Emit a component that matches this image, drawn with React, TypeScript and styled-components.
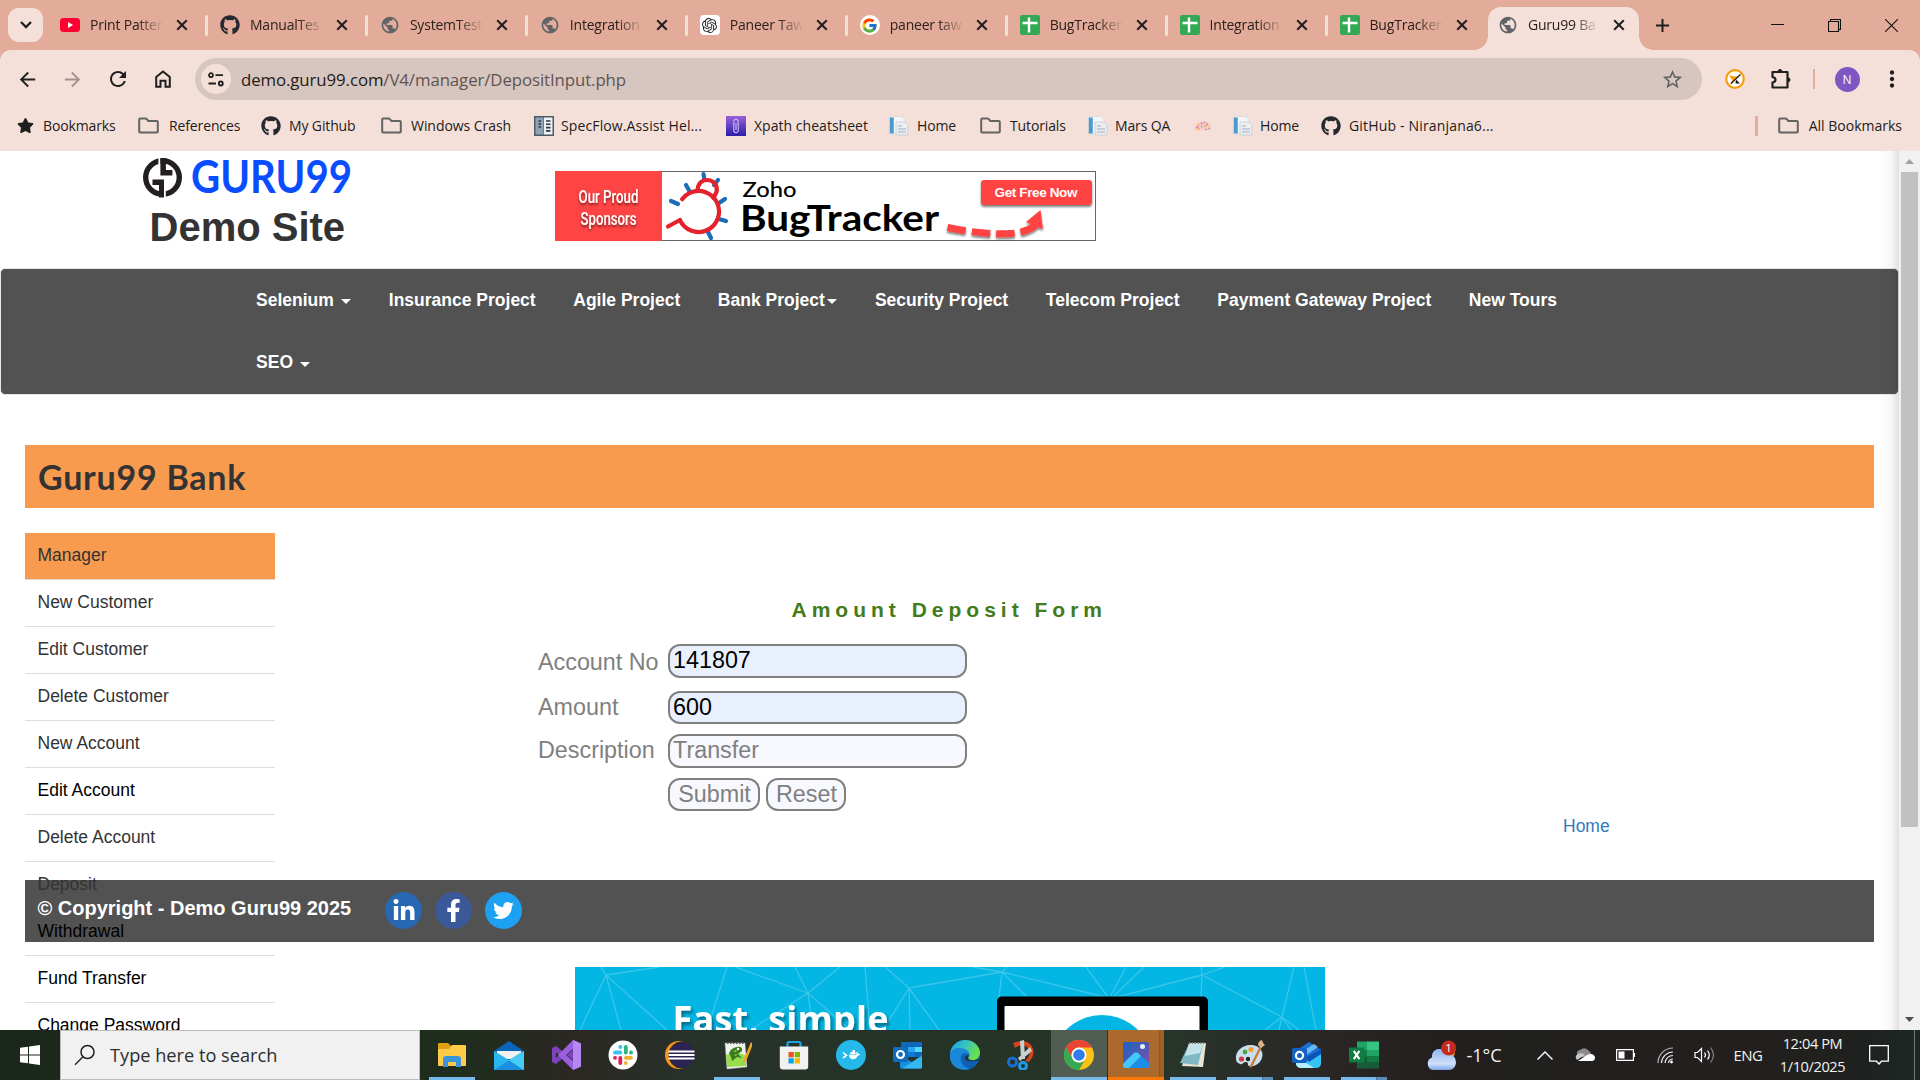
import React from "react";
import styled, { createGlobalStyle, css } from "styled-components";
import { FaGithub, FaLinkedinIn, FaFacebookF, FaTwitter, FaStar } from "react-icons/fa";
import { FcGoogle } from "react-icons/fc";
import { SiOpenai } from "react-icons/si";
import { MdPublic, MdStarOutline, MdArrowBack, MdArrowForward, MdRefresh, MdMoreVert } from "react-icons/md";

const Global = createGlobalStyle`
  html, body { margin: 0; padding: 0; background: #fff; overflow: hidden; }
  * { box-sizing: border-box; }
`;

const ui = css`
  font-family: "Open Sans", "Noto Sans", sans-serif;
`;

const Screen = styled.div`
  width: 1920px;
  height: 1080px;
  display: flex;
  flex-direction: column;
  overflow: hidden;
  ${ui}
`;

/* ---------- browser chrome ---------- */

const TabStrip = styled.div`
  height: 50px;
  flex: none;
  display: flex;
  align-items: center;
  padding-left: 8px;
  background: #e3ab99;
`;

const TabSearch = styled.div`
  width: 35px;
  height: 34px;
  border-radius: 11px;
  background: #f5e0d9;
  display: flex;
  align-items: center;
  justify-content: center;
  margin-right: 5px;
`;

const Tab = styled.div`
  width: 159.95px;
  height: 50px;
  display: flex;
  align-items: center;
  padding-left: 12px;
`;

const ActiveTab = styled.div`
  width: 151px;
  height: 43px;
  align-self: flex-end;
  margin-left: 0.5px;
  padding-left: 10px;
  display: flex;
  align-items: center;
  background: #f5e0d9;
  border-radius: 13px 13px 0 0;
  position: relative;
  padding-bottom: 7px;
  &::before,
  &::after {
    content: "";
    position: absolute;
    bottom: 0;
    width: 14px;
    height: 14px;
  }
  &::before {
    left: -14px;
    background: radial-gradient(circle at 0 0, transparent 13.5px, #f5e0d9 14px);
  }
  &::after {
    right: -14px;
    background: radial-gradient(circle at 100% 0, transparent 13.5px, #f5e0d9 14px);
  }
`;

const Favicon = styled.span`
  width: 20px;
  height: 20px;
  display: flex;
  align-items: center;
  justify-content: center;
  flex: none;
`;

const TabTitle = styled.span<{ $w?: number }>`
  width: ${(p) => p.$w ?? 72}px;
  margin-left: 10px;
  font-size: 14px;
  line-height: 20px;
  letter-spacing: -0.2px;
  color: #2c211e;
  white-space: nowrap;
  overflow: hidden;
  mask-image: linear-gradient(to right, #000 66%, transparent 102%);
`;

const CloseX = styled.span<{ $ml?: number }>`
  margin-left: ${(p) => p.$ml ?? 14}px;
  width: 12px;
  height: 12px;
  display: flex;
  flex: none;
`;

const TabDivider = styled.span`
  width: 3px;
  height: 21px;
  border-radius: 1.5px;
  background: #f5e0d9;
  margin-left: 17px;
`;

const NewTab = styled.div`
  width: 48px;
  display: flex;
  justify-content: center;
`;

const WindowControls = styled.div`
  margin-left: auto;
  display: flex;
`;

const WindowButton = styled.div`
  width: 57px;
  height: 48px;
  display: flex;
  align-items: center;
  justify-content: center;
`;

const ToolbarBack = styled.div`
  background: #e3ab99;
  flex: none;
`;

const Toolbar = styled.div`
  height: 58px;
  background: #f5e0d9;
  border-radius: 11px 11px 0 0;
  display: flex;
  align-items: center;
  padding-left: 5px;
`;

const NavButton = styled.div<{ $dim?: boolean; $w?: number }>`
  width: ${(p) => p.$w ?? 45}px;
  display: flex;
  justify-content: center;
  align-items: center;
  color: ${(p) => (p.$dim ? "#a3928d" : "#1f1f1f")};
`;

const Omnibox = styled.div`
  width: 1507px;
  height: 42px;
  margin: 0 10px;
  border-radius: 21px;
  background: #d7c6bf;
  display: flex;
  align-items: center;
  padding: 0 18px 0 6px;
`;

const SiteInfo = styled.div`
  width: 30px;
  height: 30px;
  border-radius: 50%;
  background: #f5e0d9;
  display: flex;
  align-items: center;
  justify-content: center;
`;

const Url = styled.div`
  flex: 1;
  margin-left: 10px;
  font-size: 16.8px;
  letter-spacing: -0.08px;
  color: #5f5350;
  b {
    font-weight: 400;
    color: #231b19;
  }
`;

const ThinRule = styled.span`
  width: 2px;
  height: 20px;
  background: #e3ab99;
`;

const Avatar = styled.span`
  width: 25px;
  height: 25px;
  border-radius: 50%;
  background: #7e57c2;
  color: #fff;
  font-size: 12px;
  display: flex;
  align-items: center;
  justify-content: center;
`;

const BookmarkBar = styled.div`
  height: 43px;
  flex: none;
  background: #f5e0d9;
  display: flex;
  align-items: center;
  padding: 0 18px 8px 17px;
  font-size: 14px;
  line-height: 18px;
  color: #231b19;
  white-space: nowrap;
`;

const Bookmark = styled.div<{ $w?: number; $gap?: number; $ls?: number }>`
  width: ${(p) => (p.$w ? p.$w + "px" : "auto")};
  display: flex;
  align-items: center;
  gap: ${(p) => p.$gap ?? 8}px;
  flex: none;
  letter-spacing: ${(p) => p.$ls ?? -0.13}px;
`;

const BookmarkRule = styled.span`
  width: 2.5px;
  height: 20px;
  border-radius: 1px;
  background: #e3ab99;
  margin: 0 20px 0 auto;
`;

/* ---------- page ---------- */

const Viewport = styled.div`
  height: 879px;
  flex: none;
  display: flex;
  background: #fff;
  overflow: hidden;
  font-family: "Liberation Sans", Arial, sans-serif;
  font-size: 17.5px;
`;

const Page = styled.div`
  width: 1899px;
  height: 879px;
  overflow: hidden;
  color: #333;
  position: relative;
`;

const EdgeShade = styled.div`
  position: absolute;
  right: 0;
  top: 0;
  bottom: 0;
  width: 20px;
  background: linear-gradient(to right, rgba(0, 0, 0, 0), rgba(0, 0, 0, 0.03) 60%, rgba(0, 0, 0, 0.12));
`;

const Scrollbar = styled.div`
  width: 21px;
  background: #f1f1f1;
  display: flex;
  flex-direction: column;
  align-items: center;
`;

const ScrollArrow = styled.div`
  height: 21px;
  display: flex;
  align-items: center;
`;

const ScrollThumb = styled.div`
  width: 17px;
  height: 655px;
  background: #c1c1c1;
  margin-bottom: auto;
`;

const SiteHeader = styled.div`
  height: 117px;
  display: flex;
  padding-left: 142px;
`;

const Brand = styled.div`
  width: 413px;
  padding-top: 5px;
`;

const DemoSite = styled.h2`
  margin: 4px 0 0 7.5px;
  font-size: 40px;
  line-height: 46px;
  font-weight: 700;
  color: #333;
`;

const Sponsor = styled.div`
  padding-top: 20px;
`;

const NavBar = styled.nav`
  height: 127px;
  border: 1px solid #e7e7e7;
  border-radius: 5px;
  background: #525252;
  display: flex;
  flex-wrap: wrap;
  align-content: flex-start;
  padding: 0 300px 0 236.25px;
`;

const NavItem = styled.a`
  height: 62.5px;
  padding: 0 18.8px;
  display: flex;
  align-items: center;
  color: #fff;
  font-weight: 700;
  white-space: pre;
`;

const Caret = styled.span`
  margin: 3px 0 0 2.5px;
  border: 5px solid transparent;
  border-top-color: #fff;
  border-bottom: 0;
`;

const Container = styled.div`
  padding: 50px 25px 0;
`;

const BankBar = styled.div`
  height: 63px;
  padding-left: 13px;
  background: #f99b4f;
  font: 700 34px/63px Lato, "Open Sans", sans-serif;
  letter-spacing: 0.75px;
  color: #333;
`;

/* Zero-height so the list runs on beneath the footer, whose background
   covers the rules while the link text stays on top. */
const SideMenu = styled.ul`
  list-style: none;
  width: 250px;
  height: 0;
  margin: 25px 0 0;
  padding: 0;
`;

const SideItem = styled.li<{ $active?: boolean; $black?: boolean }>`
  height: 47px;
  padding-left: 12.5px;
  line-height: 45px;
  border-bottom: 1px solid #ddd;
  background: ${(p) => (p.$active ? "#f99b4f" : "transparent")};
  color: ${(p) => (p.$black ? "#000" : "#333")};
`;

const FormArea = styled.div`
  height: 347px;
  padding: 65px 0 0 513px;
`;

const FormHeading = styled.div`
  height: 46px;
  padding-left: 253.5px;
  font-size: 21px;
  line-height: 24px;
  font-weight: 700;
  letter-spacing: 5px;
  color: #437c1a;
`;

const FormRow = styled.div<{ $h: number; $mb: number }>`
  height: ${(p) => p.$h}px;
  margin-bottom: ${(p) => p.$mb}px;
  display: flex;
  align-items: stretch;
  font-size: 23.33px;
  color: #808080;
`;

const Label = styled.label<{ $drop?: number }>`
  width: 130px;
  line-height: 34px;
  margin-top: ${(p) => p.$drop ?? 0}px;
`;

const fieldSkin = css`
  border: 2px solid #808080;
  border-radius: 12px;
  font: 23.33px "Liberation Sans", Arial, sans-serif;
  outline: none;
`;

const Field = styled.input<{ $filled?: boolean; $pl?: number; $pb?: number }>`
  ${fieldSkin}
  width: 299px;
  padding: 0 2px ${(p) => p.$pb ?? 2}px ${(p) => p.$pl ?? 3}px;
  background: ${(p) => (p.$filled ? "#e8f0fe" : "#f8f8ff")};
  color: ${(p) => (p.$filled ? "#000" : "#808080")};
`;

const Button = styled.button<{ $w: number }>`
  ${fieldSkin}
  width: ${(p) => p.$w}px;
  margin-right: 6px;
  padding: 0 0 0 1px;
  background: #f8f8ff;
  color: #808080;
`;

const HomeLink = styled.div`
  padding-left: 1025px;
  padding-top: 5px;
  line-height: 20px;
  color: #337ab7;
`;

const Footer = styled.div`
  height: 62px;
  background: #525252;
  padding-left: 12.5px;
  color: #fff;
  font-size: 20px;
  font-weight: 700;
  line-height: 57px;
  white-space: nowrap;
`;

const Social = styled.span<{ $bg: string; $ml: number }>`
  display: inline-flex;
  width: 37px;
  height: 37px;
  margin-left: ${(p) => p.$ml}px;
  border-radius: 50%;
  background: ${(p) => p.$bg};
  align-items: center;
  justify-content: center;
  vertical-align: middle;
  line-height: 0;
  margin-top: 2px;
`;

const Promo = styled.div`
  margin: 25px 0 0 550px;
  width: 750px;
  height: 63px;
  overflow: hidden;
  line-height: 0;
`;

/* ---------- taskbar ---------- */

const Taskbar = styled.div`
  height: 50px;
  flex: none;
  display: flex;
  background: linear-gradient(to right, #1c271b 0, #1f2d1d 460px, #2b2723 570px, #27322a 690px, #253426 1000px, #28332a 1180px, #2a2625 1330px, #231f1e 1440px, #20201e 1520px, #241f1e 1700px, #1f211f 1860px, #1d2723 1910px);
  color: #f2f2f2;
`;

const StartButton = styled.div`
  width: 60px;
  display: flex;
  align-items: center;
  justify-content: center;
`;

const SearchBox = styled.div`
  width: 360px;
  background: #f1f1f1;
  border: 1px solid #bdbdbd;
  display: flex;
  align-items: center;
  padding-left: 13px;
  gap: 14px;
  font-size: 18.2px;
  color: #2d2d2d;
`;

const AppStrip = styled.div`
  display: flex;
  margin-left: 3.5px;
`;

const AppSlot = styled.div<{ $bg?: string; $line?: string; $full?: boolean }>`
  width: 57px;
  height: 50px;
  display: flex;
  flex-direction: column;
  align-items: center;
  padding-top: 10px;
  justify-content: space-between;
  background: ${(p) => p.$bg ?? "transparent"};
  &::after {
    content: "";
    width: ${(p) => (p.$full ? 56 : 46)}px;
    height: 3px;
    background: ${(p) => p.$line ?? "transparent"};
  }
`;

const Tray = styled.div`
  flex: 1;
  display: flex;
  align-items: center;
  padding-left: 33px;
`;

const TrayCell = styled.div<{ $w: number }>`
  width: ${(p) => p.$w}px;
  display: flex;
  justify-content: center;
  align-items: center;
  flex: none;
`;

const Temp = styled(TrayCell)`
  font-size: 18px;
  justify-content: flex-start;
  padding-left: 10px;
`;

const Lang = styled(TrayCell)`
  font-size: 15px;
  letter-spacing: -0.5px;
`;

const Clock = styled(TrayCell)`
  flex-direction: column;
  font-size: 14.6px;
  line-height: 23px;
  letter-spacing: -0.4px;
`;

const DesktopEdge = styled.div`
  width: 1px;
  height: 50px;
  margin-left: auto;
  margin-right: 5px;
  background: #777;
`;

/* ---------- icons ---------- */

const XMark = () => (
  <svg width="12" height="12" viewBox="0 0 12 12" stroke="#1f1f1f" strokeWidth="2">
    <path d="M1.2 1.2l9.6 9.6M10.8 1.2L1.2 10.8" />
  </svg>
);

const YouTube = () => (
  <svg width="20" height="20" viewBox="0 0 20 20">
    <rect y="3" width="20" height="14" rx="3.4" fill="#ff0033" />
    <path d="M8 7l5 3-5 3z" fill="#fff" />
  </svg>
);

const Sheets = () => (
  <svg width="20" height="20" viewBox="0 0 20 20">
    <rect width="20" height="20" rx="2" fill="#34a853" />
    <path d="M9 2.5v15M2.5 8h15" stroke="#fff" strokeWidth="2.4" />
  </svg>
);

const OpenAiTile = styled.span`
  width: 20px;
  height: 20px;
  border-radius: 4px;
  background: #fff;
  display: flex;
  align-items: center;
  justify-content: center;
`;

const GoogleTile = styled(OpenAiTile)`
  border-radius: 50%;
`;

const Folder = () => (
  <svg width="21" height="17" viewBox="0 0 21 17" fill="none" stroke="#636363" strokeWidth="2" strokeLinejoin="round">
    <path d="M1.2 3V14.5q0 1 1 1h16.6q1 0 1-1V5q0-1-1-1H10.5L8 1.4H2.2q-1 0-1 1z" />
  </svg>
);

const SpecFlow = () => (
  <svg width="20" height="20" viewBox="0 0 20 20">
    <rect width="20" height="20" fill="#4b5a66" />
    <rect x="1.5" y="1.5" width="8" height="17" fill="#8fa3b5" />
    <rect x="10" y="1.5" width="8.5" height="17" fill="#eef2f5" />
    <path d="M4.500 5h2.500M4.500 8h2.500M4.500 11h2.500M12 5h4.500M12 8.300h4.500M12 11.600h4.500M12 14.900h4.500" stroke="#2d3944" strokeWidth="1.6" />
  </svg>
);

const Xpath = () => (
  <svg width="20" height="20" viewBox="0 0 20 20">
    <defs>
      <linearGradient id="xp" x1="0" y1="0" x2="0" y2="1">
        <stop offset="0" stopColor="#9a62d8" />
        <stop offset="1" stopColor="#2a1fa8" />
      </linearGradient>
    </defs>
    <rect width="20" height="20" fill="url(#xp)" />
    <path d="M7.800 6v8.500a2.200 2.200 0 004.400 0V5.500a2 2 0 00-4.400 0M10 7v7" fill="none" stroke="#c9bdf2" strokeWidth="1.1" />
  </svg>
);

const PageIcon = () => (
  <svg width="20" height="20" viewBox="0 0 20 20">
    <path d="M1 .5h12l3 3V18H1z" fill="#f4f6f8" stroke="#cdd5dc" strokeWidth=".7" />
    <path d="M.8 1.500h4v16h-4z" fill="#4b9bd0" />
    <path d="M7 6h9l3 3v10H7z" fill="#eceff2" stroke="#bcc5cd" strokeWidth=".7" />
    <path d="M9 10h4M9 13h8M9 16h8" stroke="#b7c4d0" strokeWidth="1.4" />
  </svg>
);

const Brain = () => (
  <svg width="20" height="20" viewBox="0 0 20 20">
    <path d="M1 13.500q0-5 4-6.500 3-2.500 7-2 5 1 6 6l-1 4-3-1.500-5 1-3-1-2 1.500z" fill="#f3cfc6" />
    <path d="M3 12l3-2M8 6.500l1.500 2.500M15 7.500l-2 2M12 14l2-1" stroke="#e678a8" strokeWidth="1.300" />
    <path d="M11 11l3-2M5 14l2-2M5 9l1-1" stroke="#f0a84e" strokeWidth="1.300" />
    <path d="M8 10l1 1.500M15.500 12l1.500 1M11 6l1 1" stroke="#8f96de" strokeWidth="1.300" />
  </svg>
);

const GuruLogo = () => (
  <svg width="216" height="44" viewBox="0 0 216 44" style={{ display: "block" }}>
    <ellipse cx="20.500" cy="21.500" rx="16.800" ry="16.800" fill="none" stroke="#231f20" strokeWidth="5.400" />
    <path d="M17.400 0v25M22.800 20v24" stroke="#fff" strokeWidth="2" />
    <path d="M18.400 2v17.500h12V14h-6.500V2z" fill="#231f20" />
    <path d="M10.500 23.500h11.500v18h-5v-12.500h-6.500z" fill="#231f20" />
    <path d="M18 21.300h14" stroke="#fff" strokeWidth="1.800" />
    <text x="49" y="37" fontFamily="Lato, sans-serif" fontWeight="700" fontSize="46.500" fill="#0a4dff" textLength="161" lengthAdjust="spacingAndGlyphs">
      GURU99
    </text>
  </svg>
);

const SponsorBanner = () => (
  <svg width="541" height="70" viewBox="0 0 541 70" style={{ display: "block" }}>
    <defs>
      <filter id="soft" x="-20%" y="-20%" width="140%" height="160%">
        <feDropShadow dx="0" dy="2" stdDeviation="1.2" floodOpacity=".5" />
      </filter>
    </defs>
    <rect x=".5" y=".5" width="540" height="69" fill="#fff" stroke="#666" />
    <rect width="107" height="70" fill="#ff4444" />
    <g fontFamily="Roboto, sans-serif" fontSize="18" fill="#fff" filter="url(#soft)" fontWeight="500">
      <text x="23.500" y="31.500" textLength="60" lengthAdjust="spacingAndGlyphs">Our Proud</text>
      <text x="25.500" y="54" textLength="56" lengthAdjust="spacingAndGlyphs">Sponsors</text>
    </g>
    <path d="M148.500 3l1 6M163 9l-4 5M131 14l4 7M116 30l7 3M170 28l-6 4M171 50l-7-2M156 67l-4-8" stroke="#1c6db8" strokeWidth="4.200" strokeLinecap="round" />
    <g fill="none" stroke="#e4222b" strokeWidth="4.200" strokeLinecap="round">
      <path d="M142.500 20c0-7 4-11 9.500-11 7 0 11 6 9.500 12l-3 6" />
      <ellipse cx="143.500" cy="40.500" rx="20.500" ry="20.500" strokeDasharray="106 23" transform="rotate(-205 143.500 40.500) scale(1 -1) translate(0 -81)" />
      <path d="M125 49l-12 6.500" />
    </g>
    <text x="187.500" y="25.500" fontFamily="Lato, sans-serif" fontSize="22" fontWeight="500" textLength="54" lengthAdjust="spacingAndGlyphs">Zoho</text>
    <text x="185" y="60" fontFamily="Lato, sans-serif" fontSize="36.500" fontWeight="700" textLength="199" lengthAdjust="spacingAndGlyphs">BugTracker</text>
    <g filter="url(#soft)">
      <rect x="426" y="9" width="111" height="25" rx="3" fill="#ff4343" />
      <path d="M392.500 56.500Q430 64 455 62.500q20-1 29-12" fill="none" stroke="#ff4343" strokeWidth="7" strokeDasharray="18.500 6" />
      <path d="M485.500 39l2.500 19-17-7z" fill="#ff4343" />
    </g>
    <text x="439.500" y="26" fontFamily="Liberation Sans, sans-serif" fontSize="13.500" fontWeight="700" fill="#fff" textLength="83">Get Free Now</text>
  </svg>
);

const promoLines =
  "M31 8L26 0M31 8L84 0M31 8L5 63M31 8L46 63M31 8L92 63M152 0L132 63M233 26L160 0M233 26L220 0M233 26L265 0M233 26L175 63M233 26L238 63M233 26L275 63M290 0L295 63M334 21L310 0M334 21L427 5M334 21L308 63M334 21L335 63M334 21L364 63M427 5L398 0M427 5L424 30M427 5L452 30M427 5L530 30M427 5L432 0M511 0L533 30M551 0L535 30M569 0L538 30M538 31L627 8M627 8L650 0M627 8L626 0M627 8L626 30M627 8L707 50M719 0L707 50M729 0L741 63M707 50L690 63M707 50L704 63M707 50L716 63M707 50L724 63";

const PromoArt = () => (
  <svg width="750" height="63" viewBox="0 0 750 63">
    <defs>
      <filter id="txt" x="-5%" y="-20%" width="115%" height="160%">
        <feDropShadow dx="2" dy="3" stdDeviation="1.500" floodOpacity=".4" />
      </filter>
    </defs>
    <rect width="750" height="63" fill="#03b6e3" />
    <path d={promoLines} stroke="#5fd0ee" strokeOpacity=".6" strokeWidth="1.300" fill="none" />
    <text x="97.500" y="65" fontFamily="Open Sans, sans-serif" fontSize="36" fontWeight="700" fill="#fff" textLength="216" filter="url(#txt)">Fast, simple</text>
    <rect x="422" y="29.500" width="211" height="60" rx="5" fill="#000" />
    <rect x="429.500" y="39" width="195" height="50" rx="1" fill="#fff" />
    <circle cx="527" cy="99" r="51" fill="#03b6e3" />
  </svg>
);

const I = (p: { children: React.ReactNode }) => (
  <svg width="30" height="30" viewBox="0 0 30 30">
    {p.children}
  </svg>
);

const Explorer = () => (
  <I>
    <path d="M1 4q0-1 1-1h9l3 3v6H1z" fill="#e39f14" />
    <path d="M1 9h11l3-4h13q1 0 1 1v19q0 1-1 1H2q-1 0-1-1z" fill="#fdcb48" />
    <path d="M6 27v-8q0-3 3-3h12q3 0 3 3v8h-5v-5h-8v5z" fill="#3a93dd" />
  </I>
);
const Mail = () => (
  <I>
    <path d="M0 11L15 1l15 10v6H0z" fill="#0a64b8" />
    <path d="M3 11h24v8H3z" fill="#f2f2f2" />
    <path d="M0 11l15 9 15-9v19H0z" fill="#29b5ee" />
    <path d="M0 30L30 11v19z" fill="#1a8fe0" />
    <path d="M30 30L13 19l2 1 15-9z" fill="#45ccf5" />
  </I>
);
const VisualStudio = () => (
  <I>
    <path d="M1 8l4-2 18 15V9L5 24l-4-2V8zm4 4v6l3-3z" fill="#7d43bd" fillRule="evenodd" />
    <path d="M7 15L22 0l8 3.500v23L22 30z M15 15l7 6V9z" fill="#9a5fe0" fillRule="evenodd" />
    <path d="M22 0l8 3.500v23L22 30z" fill="#b587f0" />
  </I>
);
const Slack = () => (
  <I>
    <circle cx="15" cy="15" r="14.500" fill="#fff" />
    <g strokeWidth="3.800" strokeLinecap="round" fill="none">
      <path d="M12.300 7v.1M7 12.500h5.300" stroke="#36c5f0" />
      <path d="M17.800 7v5.500M23 12.500h.1" stroke="#2eb67d" />
      <path d="M17.800 17.800H23M17.800 23v.1" stroke="#ecb22e" />
      <path d="M12.300 17.800V23M7 17.800h.1" stroke="#e01e5a" />
    </g>
  </I>
);
const Eclipse = () => (
  <I>
    <circle cx="14" cy="15" r="14" fill="#f7941e" />
    <circle cx="17" cy="15" r="13.200" fill="#2c2255" stroke="#26321f" />
    <path d="M3.500 11.500h26M3.500 15h26M3.500 18.500h26" stroke="#fff" strokeWidth="1.900" />
  </I>
);
const NotepadPP = () => (
  <I>
    <path d="M3 3h20l2 24-20 2z" fill="#eef2e8" stroke="#aab" strokeWidth=".5" />
    <path d="M4 15q9-4 19 0l1 11-19 1z" fill="#9bdc4e" />
    <path d="M7 13q2-5 8-6t5 4l-4 3 4 4-5-1-5 4-1-4z" fill="#3b7d1e" />
    <path d="M11 11l4-1-1 2zM12 15l3-1-1 2z" fill="#9bdc4e" />
    <path d="M5 3h17" stroke="#555" strokeWidth="2" strokeDasharray="1.500 1.500" />
    <path d="M29 2l-7 17-1 5 3.500-4L31 4z" fill="#f1a51f" />
    <circle cx="16" cy="9" r="1.200" fill="#fff" />
  </I>
);
const Store = () => (
  <I>
    <path d="M8.500 8V3.500Q8.500 2 10 2h10q1.500 0 1.500 1.500V8" fill="none" stroke="#1fa3e8" strokeWidth="2.200" />
    <path d="M.8 6.500h28.400v20q0 3-3 3H3.800q-3 0-3-3z" fill="#f1f1f1" />
    <path d="M9.500 12h5.300v5.300H9.500z" fill="#f25022" />
    <path d="M15.700 12H21v5.300h-5.300z" fill="#7fba00" />
    <path d="M9.500 18.200h5.300v5.300H9.500z" fill="#00a4ef" />
    <path d="M15.700 18.200H21v5.300h-5.300z" fill="#ffb900" />
  </I>
);
const Docker = () => (
  <I>
    <circle cx="15" cy="15" r="15" fill="#24b8eb" />
    <path d="M7 12.500l3.500 2.800L7 18" stroke="#fff" strokeWidth="1.600" fill="none" />
    <path d="M13 14.500h7.500q.2-2-.6-2.500 2-.5 2.300 1.800 1.500-.2 2 .5-.8 1.500-2.500 1.400-1.500 3.500-5 3.500-3.500 0-3.700-4.700zM14.500 12h5v2h-5zM16.500 10h2.500v2h-2.500z" fill="#fff" />
  </I>
);
const Outlook = () => (
  <I>
    <path d="M9 2h19q1 0 1 1v14H8V3q0-1 1-1z" fill="#1068bb" />
    <path d="M15 7h7v5h-7z" fill="#28a8ea" />
    <path d="M22 7h7v5h-7z" fill="#50d9ff" />
    <path d="M15 12h7v5h-7z" fill="#0f78d4" />
    <path d="M7 15l12 7 10-7v12q0 1.500-1.500 1.500h-19Q7 28.500 7 27z" fill="#1490df" />
    <path d="M29 16L9 28.500h19q1 0 1-1z" fill="#35b8f1" />
    <rect x="0" y="7" width="15" height="15" rx="1.500" fill="#0f6cbd" />
    <circle cx="7.500" cy="14.500" r="3.500" fill="none" stroke="#fff" strokeWidth="2.200" />
  </I>
);
const Edge = () => (
  <I>
    <defs>
      <linearGradient id="eg" x1="0" y1="0" x2="1" y2=".4">
        <stop offset="0" stopColor="#1b9de2" />
        <stop offset=".5" stopColor="#34c1c4" />
        <stop offset="1" stopColor="#6bdf4e" />
      </linearGradient>
    </defs>
    <circle cx="15" cy="15" r="15" fill="#0f5fb5" />
    <path d="M0 14C1 5 8 0 15 0c9 0 15 6.500 15 12.500 0 5-3.500 7.500-7.500 7.500-4 0-5-1.500-3.500-3.500 1.500-3-1-6.500-5-6.500C8 10 2 11 0 14z" fill="url(#eg)" />
    <path d="M0 15c1-5 5-7.500 10-7 5 0 9 3 9 7-5-4-9 0-8 5 1 6 6 8 9 9C8 32-1 25 0 15z" fill="#1a87d9" />
    <path d="M19 15q-2 3 0 4.500 4 2 9.500-.5l1.500 2q-2-1-6 0-8 1-9-2-.5-3.500 4-4z" fill="#26342a" />
  </I>
);
const Snip = () => (
  <I>
    <path d="M6 3q12-5 18 2 6 8-2 17l-4-1q8-8 2-14-5-4-12 1z" fill="#d8421c" />
    <path d="M13 1l4-1 1 19h-4zM23 7l2 4-12 10-2-3z" fill="#c8cdd0" />
    <circle cx="5.500" cy="22" r="4" fill="none" stroke="#1c6fd0" strokeWidth="3" />
    <circle cx="16" cy="26" r="3.500" fill="none" stroke="#2099ea" strokeWidth="3" />
  </I>
);
const Chrome = () => (
  <I>
    <circle cx="15" cy="15" r="15" fill="#fbc116" />
    <path d="M2 7.500A15 15 0 0128 7.500H15A7.500 7.500 0 008.500 18.700z" fill="#ea4335" />
    <path d="M2 7.500A15 15 0 0015 30l6.500-11.300A7.500 7.500 0 018.500 18.700z" fill="#34a853" />
    <circle cx="15" cy="15" r="7.500" fill="#fff" />
    <circle cx="15" cy="15" r="5.800" fill="#2f7de9" />
  </I>
);
const Photos = () => (
  <I>
    <defs>
      <linearGradient id="ph" x1="0" y1="0" x2="1" y2="1">
        <stop offset="0" stopColor="#1464c0" />
        <stop offset="1" stopColor="#8a4ea8" />
      </linearGradient>
    </defs>
    <rect x="2" y="2" width="26" height="26" rx="2" fill="url(#ph)" />
    <path d="M2 23l11-10q2-2 4 0l11 10v3q0 2-2 2H4q-2 0-2-2z" fill="#1b8fe8" />
    <path d="M2 24l11-11q2-1 4 0l3 3L8 28H4q-2 0-2-2z" fill="#46c7fa" />
    <circle cx="21.500" cy="6.500" r="2.500" fill="#e6f3ff" />
  </I>
);
const Notepad = () => (
  <I>
    <path d="M11 3h17l-3 24-21-1z" fill="#e8e4d4" />
    <path d="M11 4h14l-5 21-18-2z" fill="#7fb9c6" />
    <path d="M11 4h14l-3 9-15 3z" fill="#c4e3e8" />
    <path d="M11 3h16" stroke="#777" strokeWidth="2" strokeDasharray="1.400 1.400" />
  </I>
);
const Paint = () => (
  <I>
    <path d="M1 19C0 11 8 4 17 5c8 1 12 7 10 13s-8 9-13 8c-2-1 0-4-3-4s-3 3-6 2-4-3-4-5z" fill="#c9dff0" />
    <circle cx="6.500" cy="19" r="2.600" fill="#d03b3b" />
    <circle cx="10" cy="12" r="2.400" fill="#46a546" />
    <circle cx="16" cy="9.500" r="2.600" fill="#f2a12c" />
    <circle cx="13" cy="19" r="2.200" fill="#252525" />
    <path d="M25 6l2 1-10 20-2 1 .5-3z" fill="#c97a28" />
    <path d="M23 5q0-4 4-5 1 4 3 5l-4 3z" fill="#d9b184" />
  </I>
);
const OutlookNew = () => (
  <I>
    <path d="M5 10L17 2l12 8v9H5z" fill="#1b6fd0" />
    <path d="M9 12L22 4l4 3-13 9z" fill="#69b8f5" />
    <path d="M14 18l15-9v14q0 5-5 5H9q-4 0-5-4z" fill="#36c4f5" />
    <path d="M5 17l17 11H9q-4 0-5-4z" fill="#b5edfc" />
    <path d="M13 18l16-9v5L17 22z" fill="#0a53b8" />
    <rect x="0" y="8" width="15" height="15" rx="2" fill="#0f62c0" />
    <circle cx="7.500" cy="15.500" r="3.600" fill="none" stroke="#fff" strokeWidth="2.200" />
  </I>
);
const Excel = () => (
  <I>
    <path d="M8 1.500h11v9H8z" fill="#21a366" />
    <path d="M18 1.500h12v9H18z" fill="#33c481" />
    <path d="M8 10h10v7H8z" fill="#107c41" />
    <path d="M18 10h12v7H18z" fill="#21a366" />
    <path d="M8 17h22v11.500H8z" fill="#185c37" />
    <path d="M18 16h12v6H18z" fill="#107c41" />
    <rect x="0" y="7.500" width="15.500" height="15" rx="1" fill="#107c41" />
    <path d="M4.800 10.800l5.600 8.400M10.400 10.800l-5.600 8.400" stroke="#fff" strokeWidth="2.100" />
  </I>
);

const Weather = () => (
  <svg width="31" height="32" viewBox="0 0 31 32">
    <defs>
      <linearGradient id="cl" x1="0" y1="0" x2="0" y2="1">
        <stop offset="0" stopColor="#8fb6f0" />
        <stop offset=".7" stopColor="#cfe0fb" />
        <stop offset="1" stopColor="#7ea8ea" />
      </linearGradient>
    </defs>
    <circle cx="22" cy="13" r="7" fill="#f59a23" />
    <path d="M7 31a6.500 6.500 0 01-1-12.500C5.500 12 10 9.500 14 10q5 .5 7.500 5.500 2-.5 4 .5Q30 18 30 24q-1 7-7 7z" fill="url(#cl)" />
    <circle cx="22.700" cy="9" r="7.600" fill="#c42b1c" />
    <text x="22.500" y="13" fontFamily="Open Sans, sans-serif" fontSize="11.500" fill="#fff" textAnchor="middle">1</text>
  </svg>
);

/* ---------- data ---------- */

const tabs: [React.ReactNode, string][] = [
  [<YouTube />, "Print Patter"],
  [<FaGithub size={20} color="#24292f" />, "ManualTes"],
  [<MdPublic size={22} color="#5f6368" />, "SystemTest"],
  [<MdPublic size={22} color="#5f6368" />, "Integration"],
  [<OpenAiTile><SiOpenai size={15} color="#222" /></OpenAiTile>, "Paneer Taw"],
  [<GoogleTile><FcGoogle size={17} /></GoogleTile>, "paneer taw"],
  [<Sheets />, "BugTracker"],
  [<Sheets />, "Integration"],
  [<Sheets />, "BugTracker"],
];

const sideLinks: [string, boolean][] = [
  ["Manager", false],
  ["New Customer", false],
  ["Edit Customer", false],
  ["Delete Customer", false],
  ["New Account", false],
  ["Edit Account", true],
  ["Delete Account", false],
  ["Deposit", false],
  ["Withdrawal", true],
  ["Fund Transfer", true],
  ["Change Password", true],
];

const BLUE = "#76b9ed";

export default function App() {
  return (
    <Screen>
      <Global />
      <TabStrip>
        <TabSearch>
          <svg width="12" height="8" viewBox="0 0 12 8" fill="none" stroke="#1f1f1f" strokeWidth="2.300">
            <path d="M1 1l5 5 5-5" />
          </svg>
        </TabSearch>
        {tabs.map(([icon, title], i) => (
          <Tab key={i}>
            <Favicon>{icon}</Favicon>
            <TabTitle>{title}</TabTitle>
            <CloseX><XMark /></CloseX>
            {i < 8 && <TabDivider />}
          </Tab>
        ))}
        <ActiveTab>
          <Favicon><MdPublic size={22} color="#5f6368" /></Favicon>
          <TabTitle $w={69}>Guru99 Ba</TabTitle>
          <CloseX $ml={16}><XMark /></CloseX>
        </ActiveTab>
        <NewTab>
          <svg width="13" height="13" viewBox="0 0 13 13" stroke="#1f1f1f" strokeWidth="2">
            <path d="M6.500 0v13M0 6.500h13" />
          </svg>
        </NewTab>
        <WindowControls>
          <WindowButton>
            <svg width="13" height="2"><path d="M0 .5h13" stroke="#111" /></svg>
          </WindowButton>
          <WindowButton>
            <svg width="13" height="13" viewBox="0 0 13 13" fill="none" stroke="#111" strokeWidth="1.100">
              <path d="M.5 2.500h10v10H.5zM2.500 2.500v-2h10v10h-2" />
            </svg>
          </WindowButton>
          <WindowButton>
            <svg width="13" height="13" viewBox="0 0 13 13" stroke="#111" strokeWidth="1.100">
              <path d="M0 0l13 13M13 0L0 13" />
            </svg>
          </WindowButton>
        </WindowControls>
      </TabStrip>

      <ToolbarBack>
        <Toolbar>
          <NavButton><MdArrowBack size={23} /></NavButton>
          <NavButton $dim><MdArrowForward size={23} /></NavButton>
          <NavButton><MdRefresh size={24} /></NavButton>
          <NavButton>
            <svg width="16" height="18" viewBox="0 0 16 18" fill="none" stroke="#1f1f1f" strokeWidth="2">
              <path d="M1.200 7L8 1.500 14.800 7v9.800h-4.300v-6h-5v6H1.200z" />
            </svg>
          </NavButton>
          <Omnibox>
            <SiteInfo>
              <svg width="16" height="15" viewBox="0 0 16 15" fill="none" stroke="#1f1f1f" strokeWidth="1.800">
                <circle cx="3" cy="3.200" r="2" />
                <path d="M7.500 3.200H15M.5 11.500H8" />
                <circle cx="12.800" cy="11.500" r="2" />
              </svg>
            </SiteInfo>
            <Url><b>demo.guru99.com</b>/V4/manager/DepositInput.php</Url>
            <MdStarOutline size={23} color="#5f5f5f" />
          </Omnibox>
          <NavButton $w={46}>
            <svg width="20" height="20" viewBox="0 0 20 20">
              <circle cx="10" cy="10" r="8.800" fill="#fff" stroke="#f89c0e" strokeWidth="2.200" />
              <path d="M4 6.500l6 1 5-1-4 3-1 2-3 3-2 1 2.500-4z" fill="#f89c0e" />
              <path d="M15.500 5.500L6 14.500" stroke="#1b1b1b" strokeWidth="1.200" />
              <path d="M11 10.500l4 4h-4.500z" fill="#1b1b1b" />
            </svg>
          </NavButton>
          <NavButton $w={46}>
            <svg width="22" height="22" viewBox="0 0 22 22" fill="none" stroke="#1f1f1f" strokeWidth="2.200" strokeLinejoin="round">
              <path d="M2.500 4h15v15.500h-15v-5q3-.5 3-2.700T2.500 9z" />
              <path d="M8 3.500a2 2 0 014 0zM18 9.800a2 2 0 010 4z" fill="#1f1f1f" strokeWidth="1" />
            </svg>
          </NavButton>
          <NavButton $w={20}><ThinRule /></NavButton>
          <NavButton $w={46}><Avatar>N</Avatar></NavButton>
          <NavButton $w={44}><MdMoreVert size={26} /></NavButton>
        </Toolbar>
      </ToolbarBack>

      <BookmarkBar>
        <Bookmark $w={121} $gap={9}><FaStar size={17} color="#1f1f1f" />Bookmarks</Bookmark>
        <Bookmark $w={123} $gap={10}><Folder />References</Bookmark>
        <Bookmark $w={120}><FaGithub size={20} color="#24292f" />My Github</Bookmark>
        <Bookmark $w={153} $gap={9} $ls={-0.05}><Folder />Windows Crash</Bookmark>
        <Bookmark $w={192} $gap={7} $ls={0.12}><SpecFlow />SpecFlow.Assist Hel...</Bookmark>
        <Bookmark $w={163} $ls={0.03}><Xpath />Xpath cheatsheet</Bookmark>
        <Bookmark $w={91}><PageIcon />Home</Bookmark>
        <Bookmark $w={108} $gap={9}><Folder />Tutorials</Bookmark>
        <Bookmark $w={105} $gap={7}><PageIcon />Mars QA</Bookmark>
        <Bookmark $w={40}><Brain /></Bookmark>
        <Bookmark $w={88} $gap={7}><PageIcon />Home</Bookmark>
        <Bookmark $ls={0.17}><FaGithub size={20} color="#24292f" />GitHub - Niranjana6...</Bookmark>
        <BookmarkRule />
        <Bookmark $gap={10} $ls={0}><Folder />All Bookmarks</Bookmark>
      </BookmarkBar>

      <Viewport>
        <Page>
          <SiteHeader>
            <Brand>
              <GuruLogo />
              <DemoSite>Demo Site</DemoSite>
            </Brand>
            <Sponsor><SponsorBanner /></Sponsor>
          </SiteHeader>
          <NavBar>
            <NavItem>{"Selenium "}<Caret /></NavItem>
            <NavItem>Insurance Project</NavItem>
            <NavItem>Agile Project</NavItem>
            <NavItem>Bank Project<Caret /></NavItem>
            <NavItem>Security Project</NavItem>
            <NavItem>Telecom Project</NavItem>
            <NavItem>Payment Gateway Project</NavItem>
            <NavItem>New Tours</NavItem>
            <NavItem>{"SEO "}<Caret /></NavItem>
          </NavBar>
          <Container>
            <BankBar>Guru99 Bank</BankBar>
            <SideMenu>
              {sideLinks.map(([t, black], i) => (
                <SideItem key={t} $active={i === 0} $black={black}>{t}</SideItem>
              ))}
            </SideMenu>
            <FormArea>
              <FormHeading>Amount Deposit Form</FormHeading>
              <FormRow $h={34} $mb={13}>
                <Label $drop={1}>Account No</Label>
                <Field $filled defaultValue="141807" />
              </FormRow>
              <FormRow $h={33} $mb={10}>
                <Label $drop={-1}>Amount</Label>
                <Field $filled $pb={0} $pl={3} defaultValue="600" />
              </FormRow>
              <FormRow $h={34} $mb={10}>
                <Label $drop={-1}>Description</Label>
                <Field defaultValue="Transfer" />
              </FormRow>
              <FormRow $h={33} $mb={0}>
                <Label />
                <Button $w={92}>Submit</Button>
                <Button $w={80}>Reset</Button>
              </FormRow>
              <HomeLink>Home</HomeLink>
            </FormArea>
            <Footer>
              © Copyright - Demo Guru99 2025
              <Social $bg="#2867b2" $ml={34}><FaLinkedinIn size={24} /></Social>
              <Social $bg="#3b5998" $ml={13}><FaFacebookF size={23} /></Social>
              <Social $bg="#1da1f2" $ml={13}><FaTwitter size={21} /></Social>
            </Footer>
            <Promo><PromoArt /></Promo>
          </Container>
          <EdgeShade />
        </Page>
        <Scrollbar>
          <ScrollArrow>
            <svg width="9" height="5"><path d="M0 5L4.500 0 9 5z" fill="#a3a3a3" /></svg>
          </ScrollArrow>
          <ScrollThumb />
          <ScrollArrow>
            <svg width="9" height="5"><path d="M0 0l4.500 5L9 0z" fill="#505050" /></svg>
          </ScrollArrow>
        </Scrollbar>
      </Viewport>

      <Taskbar>
        <StartButton>
          <svg width="20" height="20" viewBox="0 0 20 20" fill="#fff">
            <path d="M0 2.800L8 1.700v7.800H0zM9 1.500L20 0v9.500H9zM0 10.500h8v7.800l-8-1.100zM9 10.500h11V20L9 18.500z" />
          </svg>
        </StartButton>
        <SearchBox>
          <svg width="22" height="22" viewBox="0 0 22 22" fill="none" stroke="#222" strokeWidth="1.500">
            <circle cx="13.500" cy="8" r="6.500" />
            <path d="M9 12.800L1 20.800" />
          </svg>
          Type here to search
        </SearchBox>
        <AppStrip>
          <AppSlot $line={BLUE}><Explorer /></AppSlot>
          <AppSlot><Mail /></AppSlot>
          <AppSlot><VisualStudio /></AppSlot>
          <AppSlot><Slack /></AppSlot>
          <AppSlot><Eclipse /></AppSlot>
          <AppSlot $line={BLUE}><NotepadPP /></AppSlot>
          <AppSlot><Store /></AppSlot>
          <AppSlot><Docker /></AppSlot>
          <AppSlot><Outlook /></AppSlot>
          <AppSlot><Edge /></AppSlot>
          <AppSlot><Snip /></AppSlot>
          <AppSlot $bg="linear-gradient(to right,#515c53 56px,transparent 56px)" $line={BLUE} $full><Chrome /></AppSlot>
          <AppSlot $bg="linear-gradient(to right,#ab6a2c 51px,#8f5520 51px,#9f5f26 53px,#9f5f26 56px,transparent 56px)" $line="#ff7600" $full><Photos /></AppSlot>
          <AppSlot $line={BLUE}><Notepad /></AppSlot>
          <AppSlot $line={`linear-gradient(to right,${BLUE} 35px,#3b5a76 35px,#5b8db8 36px)`}><Paint /></AppSlot>
          <AppSlot $line={BLUE}><OutlookNew /></AppSlot>
          <AppSlot $line={`linear-gradient(to right,${BLUE} 35px,#3b5a76 35px,#5b8db8 36px)`}><Excel /></AppSlot>
        </AppStrip>
        <Tray>
          <TrayCell $w={31}><Weather /></TrayCell>
          <Temp $w={71}>-1°C</Temp>
          <TrayCell $w={34}>
            <svg width="16" height="9" viewBox="0 0 16 9" fill="none" stroke="#fff" strokeWidth="1.400"><path d="M.5 8.500L8 1l7.500 7.500" /></svg>
          </TrayCell>
          <TrayCell $w={46}>
            <svg width="20" height="14" viewBox="0 0 20 14">
              <path d="M3 9Q0 3 5 2q5-4 9 1 3 2 2 6z" fill="#8d8b8a" />
              <path d="M2 12Q-1 8 3 6q4-2 7 1z" fill="#c9c9c9" />
              <path d="M3 13l9-6q6-3 8 2 0 4-3 4z" fill="#fff" />
            </svg>
          </TrayCell>
          <TrayCell $w={35}>
            <svg width="19" height="12" viewBox="0 0 19 12"><path d="M.6.6h16.800v10.800H.6z" fill="none" stroke="#fff" strokeWidth="1.200" /><path d="M2.500 2.500h6v7h-6zM18 4h1v4h-1z" fill="#fff" /></svg>
          </TrayCell>
          <TrayCell $w={46}>
            <svg width="17" height="17" viewBox="0 0 17 17" fill="none" stroke="#e8e8e8" strokeWidth="1.200">
              <path d="M1 16A15 15 0 0116 1" opacity=".75" />
              <path d="M4.500 16A11.500 11.500 0 0116 5M8 16a8 8 0 018-7.500" />
              <path d="M11.500 16a4.500 4.500 0 014.500-4" />
              <circle cx="14.500" cy="15" r="1.400" fill="#fff" stroke="none" />
            </svg>
          </TrayCell>
          <TrayCell $w={32}>
            <svg width="21" height="18" viewBox="0 0 21 18" fill="none" stroke="#fff" strokeWidth="1.200">
              <path d="M1 6.500h2.500l4-4v13l-4-4H1z" />
              <path d="M10.500 6.500q2 2.500 0 5M13.500 4.500q3.500 4.500 0 9" />
              <path d="M16.500 1.500q6 7.500 0 15" opacity=".45" />
            </svg>
          </TrayCell>
          <Lang $w={55}>ENG</Lang>
          <Clock $w={74}>
            <span>12:04 PM</span>
            <span>1/10/2025</span>
          </Clock>
          <TrayCell $w={59}>
            <svg width="20" height="20" viewBox="0 0 20 20" fill="none" stroke="#fff" strokeWidth="1.300">
              <path d="M.7.700h18.600v15.500H12.500L10 19l-2.500-2.800H.7z" />
            </svg>
          </TrayCell>
          <DesktopEdge />
        </Tray>
      </Taskbar>
    </Screen>
  );
}
